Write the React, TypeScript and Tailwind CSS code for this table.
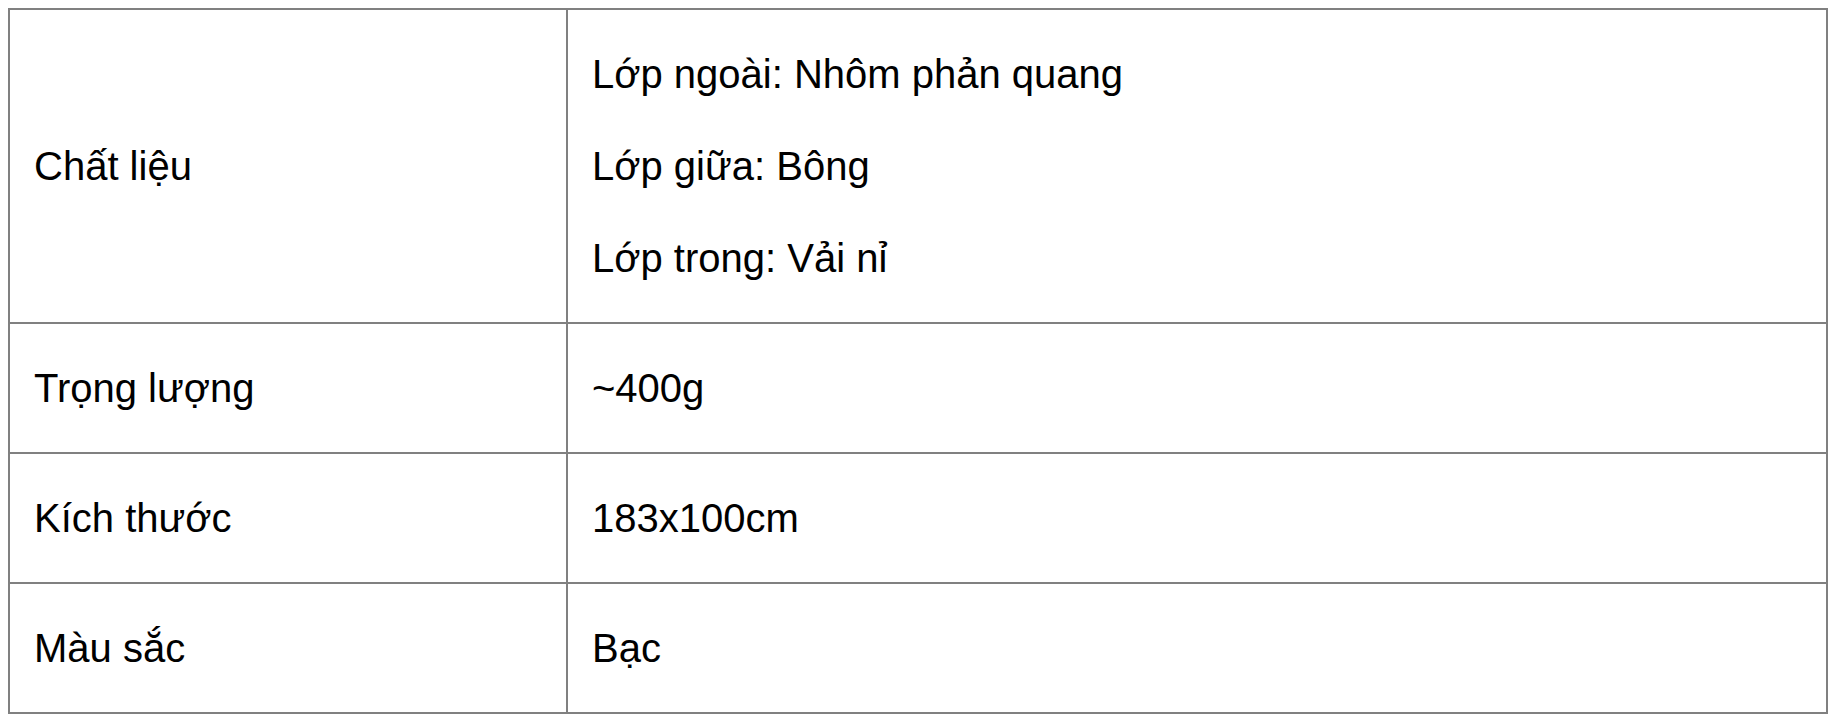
import React from "react";

const rows: { label: string; values: string[] }[] = [
  { label: "Chất liệu", values: ["Lớp ngoài: Nhôm phản quang", "Lớp giữa: Bông", "Lớp trong: Vải nỉ"] },
  { label: "Trọng lượng", values: ["~400g"] },
  { label: "Kích thước", values: ["183x100cm"] },
  { label: "Màu sắc", values: ["Bạc"] },
];

export default function App() {
  return (
    <div
      className="min-h-[726px] bg-white p-2 text-black"
      style={{ fontFamily: '"Liberation Sans", Arial, sans-serif' }}
    >
      <div className="w-[1820px] border-l-2 border-t-2 border-[#808080]">
        {rows.map((r) => (
          <div key={r.label} className="grid grid-cols-[558px_1260px]">
            <div className="flex items-center border-b-2 border-r-2 border-[#808080] px-6 py-[41px] text-[40px] leading-[46px]">
              {r.label}
            </div>
            <div className="flex flex-col justify-center gap-[46px] border-b-2 border-r-2 border-[#808080] px-6 py-[41px] text-[40px] leading-[46px]">
              {r.values.map((v) => (
                <p key={v}>{v}</p>
              ))}
            </div>
          </div>
        ))}
      </div>
    </div>
  );
}
